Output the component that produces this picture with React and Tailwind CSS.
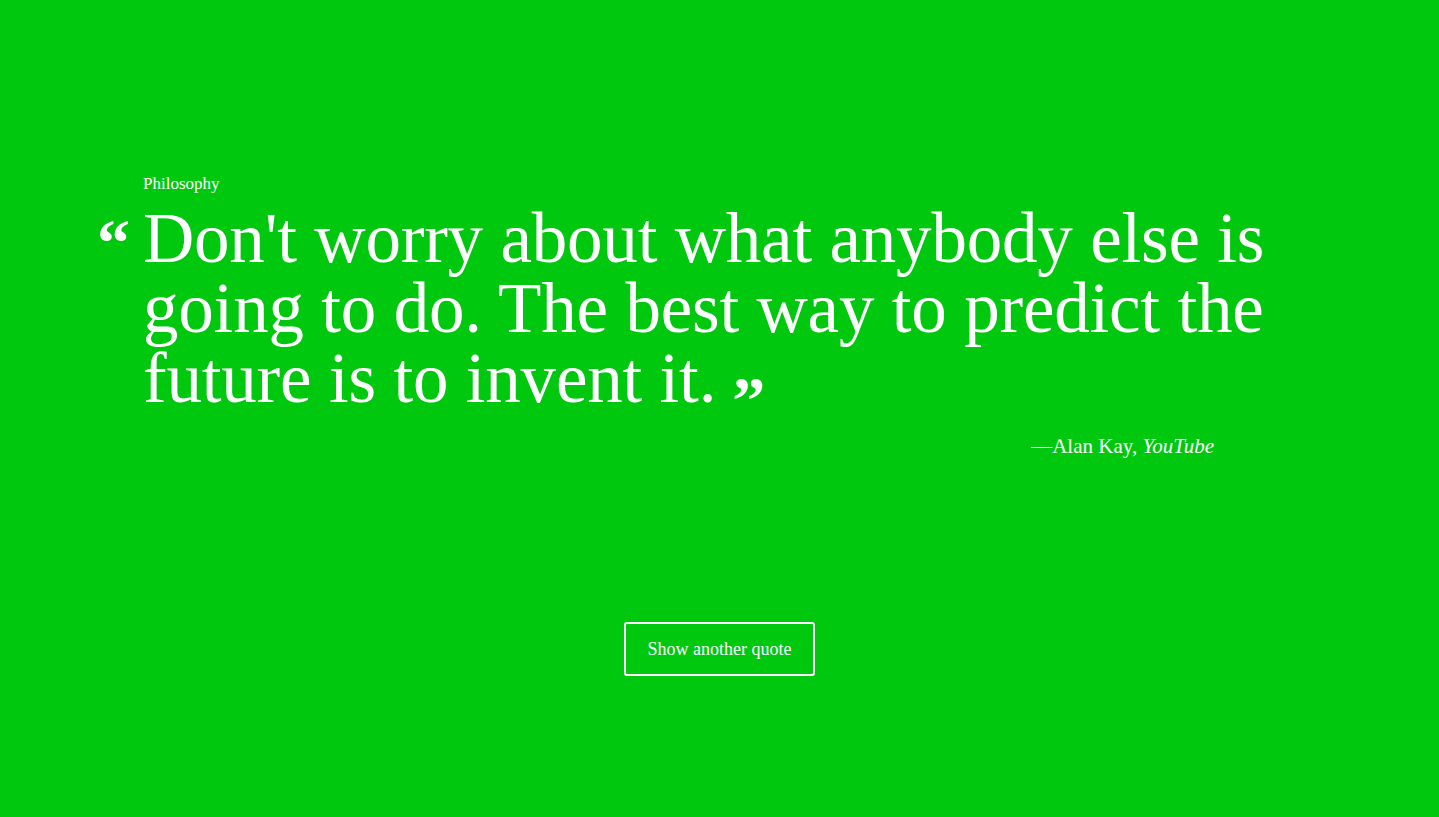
export default function App() {
  return (
    <div className="min-h-screen bg-[#00c80f] text-white font-['Liberation_Serif',serif]">
      <div className="pt-[172px] pl-[143px]">
        <p className="text-[17px] leading-6">Philosophy</p>
        <blockquote className="relative mt-[7px] whitespace-nowrap text-[71px] leading-[70px] tracking-[-0.2px]">
          <span className="absolute -left-[46px] top-[8px] text-[66px] font-bold leading-[64px]">“</span>
          Don't worry about what anybody else is
          <br />
          going to do. The best way to predict the
          <br />
          future is to invent it.
          <span className="ml-[16px] text-[66px] font-bold leading-none align-[-20px]">”</span>
        </blockquote>
        <p className="-mt-[1px] pr-[225px] text-right text-[21px] leading-7">
          —Alan Kay, <em>YouTube</em>
        </p>
      </div>
      <div className="mt-[162px] flex justify-center">
        <button className="h-[54px] w-[191px] rounded-[3px] border-2 border-white text-[18px]">
          Show another quote
        </button>
      </div>
    </div>
  )
}
